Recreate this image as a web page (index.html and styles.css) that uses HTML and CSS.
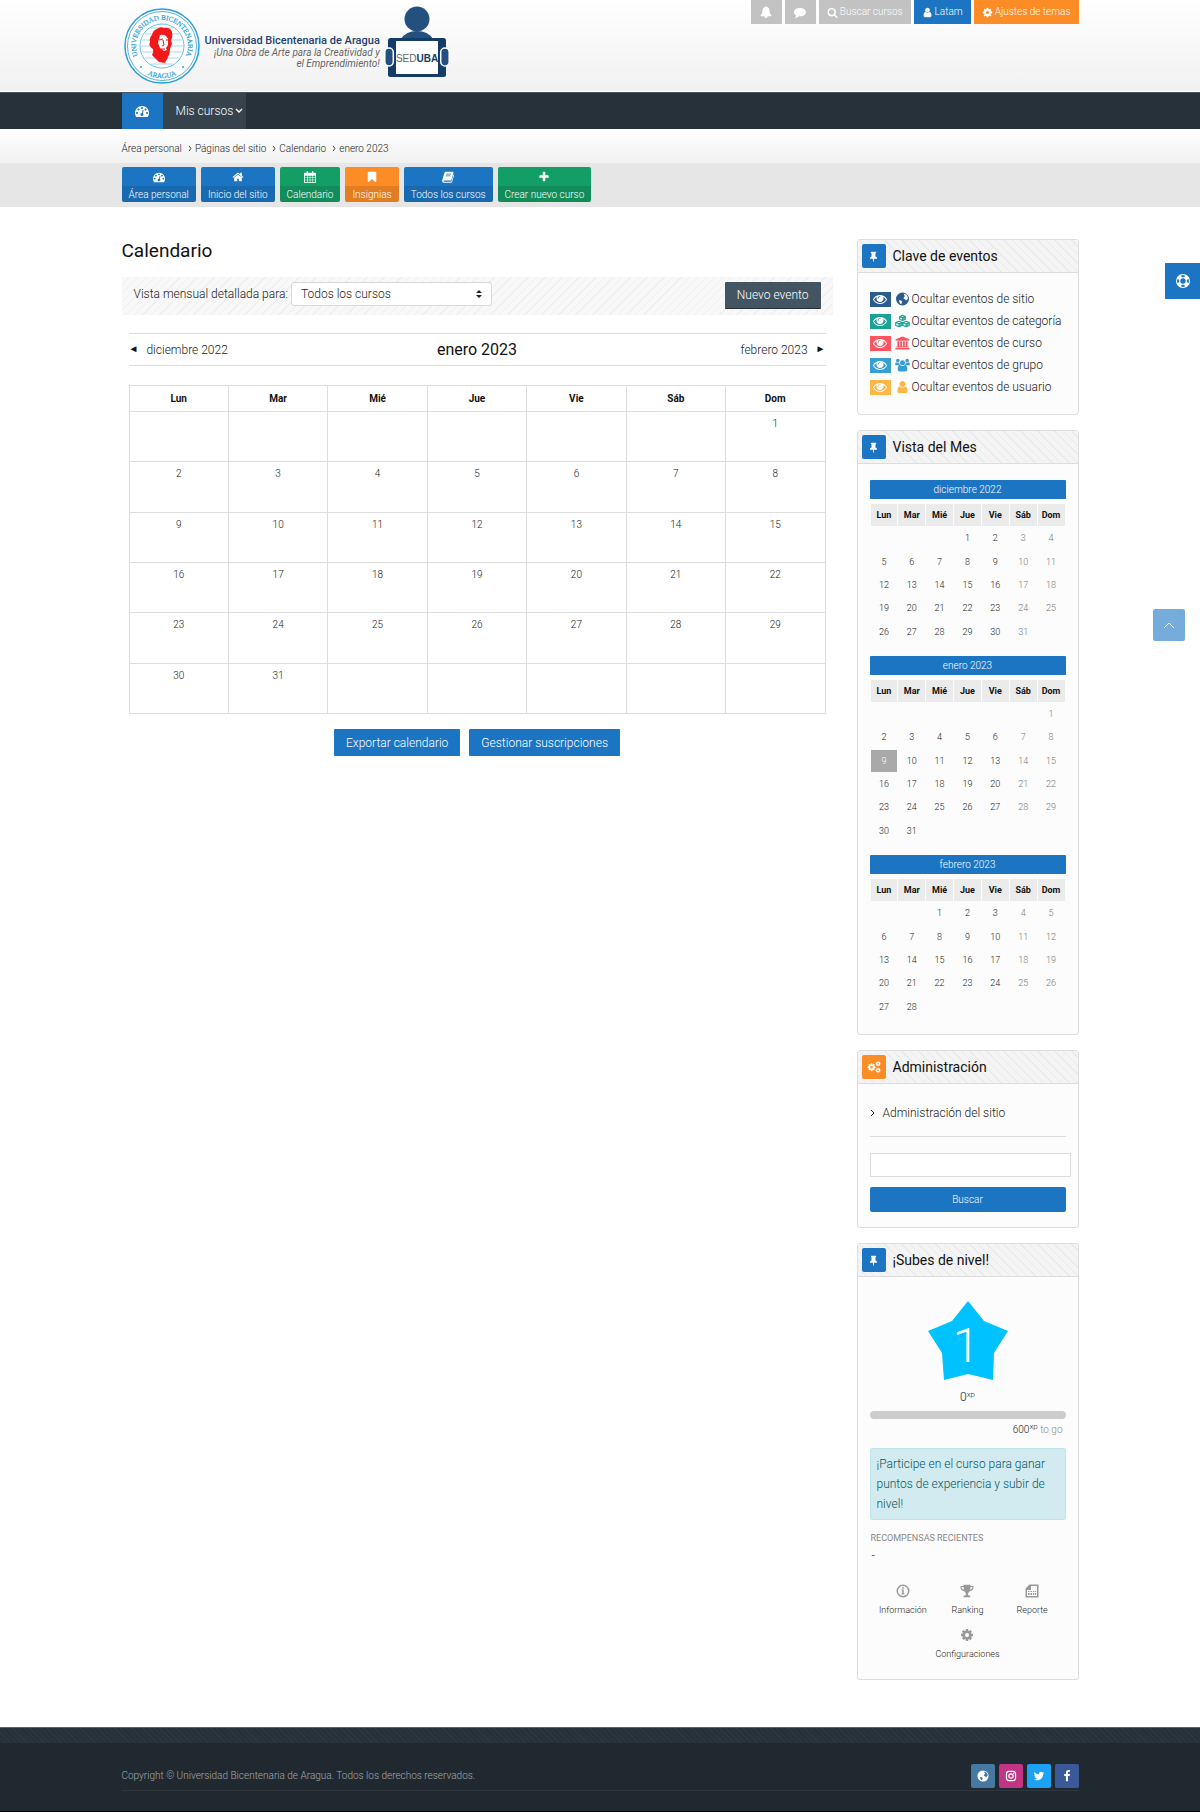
FILE: index.html
```html
<!DOCTYPE html>
<html lang="es">
<head>
<meta charset="utf-8">
<meta name="viewport" content="width=device-width, initial-scale=1">
<title>Calendario - Universidad Bicentenaria de Aragua</title>
<link rel="stylesheet" href="styles.css">
</head>
<body>
<svg class="sprite" aria-hidden="true">
  <symbol id="i-dash" viewBox="0 0 1792 1792"><path d="M384 1152q0-53-37.500-90.500t-90.500-37.500-90.500 37.500-37.500 90.500 37.500 90.500 90.500 37.500 90.500-37.500 37.500-90.500zm192-448q0-53-37.500-90.500t-90.500-37.500-90.500 37.500-37.500 90.500 37.500 90.500 90.500 37.500 90.500-37.500 37.500-90.500zm428 481l101-382q6-26-7.500-48.500t-38.500-29.500-48 6.500-30 39.500l-101 382q-60 5-107 43.500t-63 98.500q-20 77 20 146t117 89 146-20 89-117q16-60-6-117t-72-91zm660-33q0-53-37.500-90.500t-90.500-37.500-90.500 37.500-37.500 90.500 37.500 90.500 90.500 37.500 90.500-37.500 37.500-90.500zm-640-640q0-53-37.500-90.500t-90.500-37.500-90.500 37.500-37.500 90.500 37.500 90.500 90.500 37.500 90.500-37.500 37.500-90.500zm448 192q0-53-37.500-90.500t-90.500-37.500-90.500 37.500-37.500 90.500 37.500 90.500 90.500 37.500 90.500-37.500 37.500-90.500zm320 448q0 261-141 483-19 29-54 29h-1402q-35 0-54-29-141-221-141-483 0-182 71-348t191-286 286-191 348-71 348 71 286 191 191 286 71 348z"/></symbol>
  <symbol id="i-home" viewBox="0 0 1792 1792"><path d="M1472 992v480q0 26-19 45t-45 19h-384v-384h-256v384h-384q-26 0-45-19t-19-45v-480l576-480 575 474q1 2 1 6zm223-69l-62 74q-8 9-21 11h-3q-13 0-21-7l-692-577-692 577q-12 8-24 7-13-2-21-11l-62-74q-8-10-7-23t11-22l719-599q32-26 76-26t76 26l244 204v-195q0-14 9-23t23-9h192q14 0 23 9t9 23v408l219 182q10 8 11 22t-7 23z"/></symbol>
  <symbol id="i-user" viewBox="0 0 1792 1792"><path d="M1536 1399q0 109-62.500 187t-150.500 78h-854q-88 0-150.500-78t-62.500-187q0-85 8.500-160.500t31.500-152 58.500-131 94-89 134.500-34.500q131 128 313 128t313-128q76 0 134.500 34.500t94 89 58.500 131 31.500 152 8.500 160.500zm-256-887q0 159-112.500 271.500t-271.500 112.500-271.500-112.500-112.500-271.500 112.500-271.500 271.500-112.500 271.500 112.500 112.500 271.500z"/></symbol>
  <symbol id="i-cog" viewBox="0 0 1792 1792"><path d="M1152 896q0-106-75-181t-181-75-181 75-75 181 75 181 181 75 181-75 75-181zm512-109v222q0 12-8 23t-20 13l-185 28q-19 54-39 91 35 50 107 138 10 12 10 25t-9 23q-27 37-99 108t-94 71q-12 0-26-9l-138-108q-44 23-91 38-16 136-29 186-7 28-36 28h-222q-14 0-24.500-8.500t-11.500-21.500l-28-184q-49-16-90-37l-141 107q-10 9-25 9-14 0-25-11-126-114-165-168-7-10-7-23 0-12 8-23 15-21 51-66.500t54-70.500q-27-50-41-99l-183-27q-13-2-21-12.500t-8-23.500v-222q0-12 8-23t19-13l186-28q14-46 39-92-40-57-107-138-10-12-10-24 0-10 9-23 26-36 98.500-107.500t94.500-71.500q13 0 26 10l138 107q44-23 91-38 16-136 29-186 7-28 36-28h222q14 0 24.500 8.500t11.500 21.500l28 184q49 16 90 37l142-107q9-9 24-9 13 0 25 10 129 119 165 170 7 8 7 22 0 12-8 23-15 21-51 66.500t-54 70.500q26 50 41 98l183 28q13 2 21 12.500t8 23.500z"/></symbol>
  <symbol id="i-search" viewBox="0 0 1792 1792"><path d="M1216 832q0-185-131.500-316.500t-316.500-131.500-316.500 131.500-131.500 316.500 131.500 316.500 316.500 131.500 316.500-131.500 131.500-316.500zm512 832q0 52-38 90t-90 38q-54 0-90-38l-343-342q-179 124-399 124-143 0-273.500-55.500t-225-150-150-225-55.500-273.500 55.500-273.500 150-225 225-150 273.500-55.500 273.500 55.500 225 150 150 225 55.500 273.500q0 220-124 399l343 343q37 37 37 90z"/></symbol>
  <symbol id="i-comment" viewBox="0 0 1792 1792"><path d="M1792 896q0 174-120 321.500t-326 233-450 85.500q-70 0-145-8-198 175-460 242-49 14-114 22-17 2-30.500-9t-17.500-29q-3-10 13-34 60-66 98-116 60-80 86-186-157-89-247.500-220t-90.500-281q0-130 71-248.500t191-204.500 286-136.500 348-50.500 348 50.500 286 136.500 191 204.500 71 248.500z"/></symbol>
  <symbol id="i-bell" viewBox="0 0 1792 1792"><path d="M1728 1408q0 52-38 90t-90 38h-448q0 106-75 181t-181 75-181-75-75-181h-448q-52 0-90-38t-38-90q50-42 91-88t85-119.500 74.500-158.500 50-206 19.500-260q0-152 117-282.500t307-158.500q-8-19-8-39 0-40 28-68t68-28 68 28 28 68q0 20-8 39 190 28 307 158.500t117 282.500q0 139 19.500 260t50 206 74.500 158.500 85 119.500 91 88z"/></symbol>
  <symbol id="i-twitter" viewBox="0 0 1792 1792"><path d="M1684 408q-67 98-162 167 1 14 1 42 0 130-38 259.500t-115.500 248.500-184.500 210.500-258 146-323 54.500q-271 0-496-145 35 4 78 4 225 0 401-138-105-2-188-64.500t-114-159.500q33 5 61 5 43 0 85-11-112-23-185.500-111.500t-73.500-205.500v-4q68 38 146 41-66-44-105-115t-39-154q0-88 44-163 121 149 294.500 238.500t371.500 99.500q-8-38-8-74 0-134 94.500-228.500t228.500-94.500q140 0 236 102 109-21 205-78-37 115-142 178 93-10 186-50z"/></symbol>
  <symbol id="i-facebook" viewBox="0 0 1792 1792"><path d="M1343 12v264h-157q-86 0-116 36t-30 108v189h293l-39 296h-254v759h-306v-759h-255v-296h255v-218q0-186 104-288.500t277-102.500q147 0 228 12z"/></symbol>
  <symbol id="i-plus" viewBox="0 0 1792 1792"><path d="M1600 736v192q0 40-28 68t-68 28h-416v416q0 40-28 68t-68 28h-192q-40 0-68-28t-28-68v-416h-416q-40 0-68-28t-28-68v-192q0-40 28-68t68-28h416v-416q0-40 28-68t68-28h192q40 0 68 28t28 68v416h416q40 0 68 28t28 68z"/></symbol>
  <symbol id="i-bookmark" viewBox="0 0 1792 1792"><path d="M1420 128q23 0 44 9 72 29 72 103v1289q0 74-72 103-19 8-44 8-48 0-83-32l-441-424-441 424q-36 33-83 33-23 0-44-9-72-29-72-103v-1289q0-74 72-103 21-9 44-9h1048z"/></symbol>
  <symbol id="i-pin" viewBox="0 0 1792 1792"><path d="M1472 1216q0 26-19 45t-45 19h-429l-51 483q-2 12-10.500 20.500t-20.500 8.500h-1q-27 0-32-27l-76-485h-404q-26 0-45-19t-19-45q0-123 78.500-221.500t177.500-98.500v-512q-52 0-90-38t-38-90 38-90 90-38h640q52 0 90 38t38 90-38 90-90 38v512q99 0 177.500 98.500t78.500 221.500z"/></symbol>
  <symbol id="i-eye" viewBox="0 0 1792 1792"><path d="M1664 960q-152-236-381-353 61 104 61 225 0 185-131.500 316.500t-316.500 131.500-316.500-131.500-131.500-316.500q0-121 61-225-229 117-381 353 133 205 333.500 326.500t434.500 121.500 434.500-121.500 333.500-326.500zm-720-384q0-20-14-34t-34-14q-125 0-214.500 89.500t-89.500 214.500q0 20 14 34t34 14 34-14 14-34q0-86 61-147t147-61q20 0 34-14t14-34zm848 384q0 34-20 69-140 230-376.500 368.500t-499.500 138.500-499.500-139-376.500-368q-20-35-20-69t20-69q140-229 376.500-368t499.500-139 499.500 139 376.500 368q20 35 20 69z"/></symbol>
  <symbol id="i-calendar" viewBox="0 0 14 14"><path fill-rule="evenodd" d="M1 2h2V.8q0-.8.800-.8t.8.800V2h4.800V.8q0-.8.800-.8t.8.800V2h2q1 0 1 1v10q0 1-1 1H1q-1 0-1-1V3q0-1 1-1zm0 3.500v2h2.500v-2zm3.200 0v2h2.500v-2zm3.200 0v2h2.500v-2zm3.200 0v2h2.400v-2zM1 8.200v2h2.500v-2zm3.200 0v2h2.500v-2zm3.200 0v2h2.500v-2zm3.200 0v2h2.400v-2zM1 10.900V13h2.500v-2.100zm3.200 0V13h2.500v-2.100zm3.200 0V13h2.500v-2.100zm3.200 0V13h2.400v-2.100z"/></symbol>
  <symbol id="i-book" viewBox="0 0 14 14"><path fill-rule="evenodd" d="M4.500 1h8q1.200 0 .9 1.200l-2.400 8q-.3 1-1.400 1H2.200q-.8 0-.5.700.2.500 1 .5h7.500q.8 0 1-.8l2.300-7.600q.8.400.5 1.400l-2.200 7.200q-.4 1.200-1.500 1.200H2.600Q.6 13.800.2 12q-.2-.8.100-1.500l2.400-8Q3.200 1 4.500 1zm.6 2.200l-.3.900h5.500l.3-.9zm-.6 2l-.3.900h5.500l.3-.9z"/></symbol>
  <symbol id="i-globe" viewBox="0 0 14 14"><path fill-rule="evenodd" d="M7 .5a6.500 6.500 0 100 13 6.500 6.500 0 000-13zM8.500 1.800l2.200.8 1.600 2.400.1 1.800-1.800 1.700-1.200-1.300-1.400-.5.600-1.700 1-1L8.400 3zM3.300 8.200l2.200.3 1.300 1.200-.8 1.500v1l-1.500-.8z"/></symbol>
  <symbol id="i-cubes" viewBox="0 0 16 14"><path fill="none" stroke="currentColor" stroke-width="1.200" stroke-linejoin="round" d="M8 .8l3 1.300v3L8 6.500 5 5.100v-3zM5 2.100l3 1.300 3-1.300M8 3.400v3M4.300 7.200l3.200 1.300v3.200l-3.200 1.500-3.500-1.500V8.500zM.8 8.500L4.200 10l3.300-1.500M4.200 10v3M11.700 7.200l3.500 1.300v3.200l-3.500 1.500-3.200-1.500V8.500zM8.500 8.500l3.300 1.500 3.400-1.500M11.800 10v3"/><path d="M8 3.400l3-1.300v3L8 6.500zM4.200 10l3.300-1.500v3.200L4.200 13zM11.800 10l3.400-1.500v3.200L11.800 13z" opacity=".7"/></symbol>
  <symbol id="i-bank" viewBox="0 0 16 14"><path d="M8 0l7.500 3v1h-1v.7h-13V4h-1V3zM2.500 5.200h2v5.600h1V5.200h2v5.600h1V5.200h2v5.600h1V5.200h2v5.600h1v1H1.500v-1h1zM.5 12.400h15V14H.5z"/></symbol>
  <symbol id="i-users" viewBox="0 0 16 14"><circle cx="3" cy="2.300" r="1.900"/><circle cx="13" cy="2.300" r="1.900"/><circle cx="8" cy="4.500" r="2.700"/><path d="M.3 7.200Q0 4 1.400 4q1.800 1 3.200.2Q4.400 6 5.500 7.200zM15.700 7.200Q16 4 14.600 4q-1.800 1-3.200.2.200 1.800-.9 3zM5.500 7q2.500 2 5 0 2.700.3 2.700 4.500 0 2.300-1.700 2.300h-7q-1.700 0-1.700-2.300Q2.800 7.300 5.500 7z"/></symbol>
  <symbol id="i-ring" viewBox="0 0 14 14"><path fill-rule="evenodd" d="M7 0a7 7 0 100 14A7 7 0 007 0zm0 4.300a2.700 2.700 0 110 5.400 2.700 2.700 0 010-5.400zM5 1.400q2-.7 4 0L8.200 3.200H5.800zM5 12.600q2 .7 4 0l-.8-1.800H5.800zM1.400 5l1.800.8v2.400L1.400 9q-.7-2 0-4zM12.600 5l-1.800.8v2.400l1.800.8q.7-2 0-4z"/></symbol>
  <symbol id="i-cogs" viewBox="0 0 16 14"><use href="#i-cog" x="0" y="2" width="10.500" height="10.500"/><use href="#i-cog" x="9.500" y="0" width="6.500" height="6.500"/><use href="#i-cog" x="9.500" y="7.500" width="6.500" height="6.500"/></symbol>
  <symbol id="i-info" viewBox="0 0 14 14"><path fill-rule="evenodd" d="M7 .5a6.500 6.500 0 100 13 6.500 6.500 0 000-13zM7 2a5 5 0 110 10A5 5 0 017 2zM6.100 3.300h1.700v1.400H6.100zM5.500 5.500h2.300v4h.7v1h-3v-1h.7v-3h-.7z"/></symbol>
  <symbol id="i-trophy" viewBox="0 0 14 14"><path fill-rule="evenodd" d="M3.500.8h7V2h3v1.500Q13.300 6.600 9.800 7.200 8.500 8.500 8 9.500v1q0 .8 2.300 1.300v1.500H3.700v-1.500Q6 11.300 6 10.500v-1q-.5-1-1.800-2.300Q.7 6.600.5 3.500V2h3zm0 2.200h-2q0 2 2.400 3Q3.500 4.500 3.500 3zm7 0q0 1.500-.4 3 2.400-1 2.400-3z"/></symbol>
  <symbol id="i-report" viewBox="0 0 14 14"><path fill-rule="evenodd" d="M4.500.5h9v13H.5v-9zM6 2v4H2v6h10V2zM3 7h1.500v1H3zm2.500 0H7v1H5.500zM8 7h1.200v1H8zm2 0h1.200v1H10zM3 9h1.500v2H3zm2.500 0H7v2H5.500zM8 9h1.200v2H8zm2 0h1.200v2H10z"/></symbol>
  <symbol id="i-instagram" viewBox="0 0 14 14"><rect x="1.700" y="1.700" width="10.600" height="10.600" rx="3" fill="none" stroke="currentColor" stroke-width="1.400"/><circle cx="7" cy="7" r="2.500" fill="none" stroke="currentColor" stroke-width="1.400"/><circle cx="10.100" cy="3.900" r=".8"/></symbol>
</svg>

<header class="masthead">
  <div class="wrap masthead-row">
    <a class="logo" href="#" aria-label="Universidad Bicentenaria de Aragua">
      <svg class="seal" viewBox="0 0 76 76">
        <defs><path id="arcTop" d="M18.100 54.700A26 26 0 1 1 57.900 54.700"/><path id="arcBottom" d="M17 62.300A32 32 0 0 0 59 62.300"/></defs>
        <circle cx="38" cy="38" r="37" fill="#fff" stroke="#2b9fd8" stroke-width="1.500"/>
        <circle cx="38" cy="38" r="34.500" fill="none" stroke="#2b9fd8" stroke-width=".8"/>
        <circle cx="38" cy="38" r="22" fill="none" stroke="#2b9fd8" stroke-width=".7"/>
        <path d="M27 20h22M21 26h34M18 32h40M17 38h42M18 44h40M21 50h34M27 56h22" stroke="#8fd0ee" stroke-width=".8"/>
        <path d="M28 27q1-5 5-6 3-3 7-1 6-1 8 4 1 5-1 8l1 4q-1 2-2 5 0 5-2 8l-3 6-6-1-7-7q2-3 1-6-5-3-3-7-1-4 2-7z" fill="#f01818"/>
        <path d="M36 27q3-1 6 1l2 3v6l-2 3 1 2-3 1-4-3-2-5z" fill="#fff"/>
        <path d="M35 32l4-1m3 1l2 0M39 32l1 5-2 1m-1 3h4M35 42l3 4 4 1" stroke="#f01818" stroke-width="1" fill="none"/>
        <text class="seal-text"><textPath href="#arcTop" startOffset="50%" text-anchor="middle">UNIVERSIDAD BICENTENARIA</textPath></text>
        <text class="seal-text"><textPath href="#arcBottom" startOffset="50%" text-anchor="middle">ARAGUA</textPath></text>
        <circle cx="17" cy="59" r="1" fill="#2b9fd8"/><circle cx="59" cy="59" r="1" fill="#2b9fd8"/>
      </svg>
      <span class="logo-words"><strong>Universidad Bicentenaria de Aragua</strong><em>¡Una Obra de Arte para la Creatividad y<br>el Emprendimiento!</em></span>
      <svg class="seduba" viewBox="0 0 66 74">
        <circle cx="33" cy="13" r="12.500" fill="#24507f"/>
        <path d="M17 33q5-8 16-8t16 8z" fill="#24507f"/>
        <rect x="4" y="32" width="58" height="39" rx="2.500" fill="#143c68"/>
        <rect x="12" y="35" width="42" height="33" fill="#fff"/>
        <rect x=".8" y="42" width="8.500" height="18" rx="4.200" fill="#24507f" stroke="#fff" stroke-width="1.500"/>
        <rect x="56.700" y="42" width="8.500" height="18" rx="4.200" fill="#24507f" stroke="#fff" stroke-width="1.500"/>
        <text x="33" y="56" text-anchor="middle" class="sed-text">SED<tspan class="uba-text">UBA</tspan></text>
      </svg>
    </a>
    <div class="user-tools">
      <button class="tool" type="button" aria-label="Notificaciones"><svg class="icon"><use href="#i-bell"/></svg></button>
      <button class="tool" type="button" aria-label="Mensajes"><svg class="icon"><use href="#i-comment"/></svg></button>
      <button class="tool tool-text" type="button"><svg class="icon-sm"><use href="#i-search"/></svg>Buscar cursos</button>
      <button class="tool tool-text blue" type="button"><svg class="icon-sm"><use href="#i-user"/></svg>Latam</button>
      <button class="tool tool-text orange" type="button"><svg class="icon-sm"><use href="#i-cog"/></svg>Ajustes de temas</button>
    </div>
  </div>
</header>

<nav class="mainnav">
  <div class="wrap mainnav-row">
    <a class="nav-home" href="#" aria-label="Área personal"><svg class="icon-lg"><use href="#i-dash"/></svg></a>
    <a class="nav-item" href="#">Mis cursos<svg class="caret" viewBox="0 0 8 8"><path d="M1 2l3 3 3-3" fill="none" stroke="currentColor" stroke-width="1.400"/></svg></a>
  </div>
</nav>

<nav class="crumbs" aria-label="Ruta">
  <div class="wrap crumbs-row">
    <a href="#">Área personal</a><svg class="sep" viewBox="0 0 4 8"><path d="M1 1l2 3-2 3"/></svg><a href="#">Páginas del sitio</a><svg class="sep" viewBox="0 0 4 8"><path d="M1 1l2 3-2 3"/></svg><a href="#">Calendario</a><svg class="sep" viewBox="0 0 4 8"><path d="M1 1l2 3-2 3"/></svg><a href="#">enero 2023</a>
  </div>
</nav>

<div class="shortcuts">
  <div class="wrap shortcuts-row">
    <a class="shortcut blue" href="#"><svg class="icon"><use href="#i-dash"/></svg><span>Área personal</span></a>
    <a class="shortcut blue" href="#"><svg class="icon"><use href="#i-home"/></svg><span>Inicio del sitio</span></a>
    <a class="shortcut green" href="#"><svg class="icon"><use href="#i-calendar"/></svg><span>Calendario</span></a>
    <a class="shortcut orange" href="#"><svg class="icon"><use href="#i-bookmark"/></svg><span>Insignias</span></a>
    <a class="shortcut blue" href="#"><svg class="icon"><use href="#i-book"/></svg><span>Todos los cursos</span></a>
    <a class="shortcut green" href="#"><svg class="icon"><use href="#i-plus"/></svg><span>Crear nuevo curso</span></a>
  </div>
</div>

<div class="wrap page">
  <main>
    <h1>Calendario</h1>
    <div class="filter">
      <label for="course">Vista mensual detallada para:</label>
      <span class="select">
        <select id="course"><option>Todos los cursos</option></select>
        <svg viewBox="0 0 6 8"><path d="M0 3l3-3 3 3zM0 5l3 3 3-3z"/></svg>
      </span>
      <button class="btn dark" type="button">Nuevo evento</button>
    </div>
    <div class="month-nav">
      <a href="#"><span class="arrow">◄</span>diciembre 2022</a>
      <h2>enero 2023</h2>
      <a class="next" href="#">febrero 2023<span class="arrow">►</span></a>
    </div>
    <table class="month">
      <thead><tr><th>Lun</th><th>Mar</th><th>Mié</th><th>Jue</th><th>Vie</th><th>Sáb</th><th>Dom</th></tr></thead>
      <tbody>
        <tr><td></td><td></td><td></td><td></td><td></td><td></td><td>1</td></tr>
        <tr><td>2</td><td>3</td><td>4</td><td>5</td><td>6</td><td>7</td><td>8</td></tr>
        <tr><td>9</td><td>10</td><td>11</td><td>12</td><td>13</td><td>14</td><td>15</td></tr>
        <tr><td>16</td><td>17</td><td>18</td><td>19</td><td>20</td><td>21</td><td>22</td></tr>
        <tr><td>23</td><td>24</td><td>25</td><td>26</td><td>27</td><td>28</td><td>29</td></tr>
        <tr><td>30</td><td>31</td><td></td><td></td><td></td><td></td><td></td></tr>
      </tbody>
    </table>
    <div class="actions">
      <button class="btn blue" type="button">Exportar calendario</button>
      <button class="btn blue" type="button">Gestionar suscripciones</button>
    </div>
  </main>

  <aside>
    <section class="panel">
      <h2 class="panel-head"><span class="badge blue"><svg class="icon-sm"><use href="#i-pin"/></svg></span>Clave de eventos</h2>
      <ul class="panel-body keys">
        <li class="k-site"><a href="#"><span class="eye"><svg class="icon-lg"><use href="#i-eye"/></svg></span><svg class="key-icon"><use href="#i-globe"/></svg>Ocultar eventos de sitio</a></li>
        <li class="k-category"><a href="#"><span class="eye"><svg class="icon-lg"><use href="#i-eye"/></svg></span><svg class="key-icon"><use href="#i-cubes"/></svg>Ocultar eventos de categoría</a></li>
        <li class="k-course"><a href="#"><span class="eye"><svg class="icon-lg"><use href="#i-eye"/></svg></span><svg class="key-icon"><use href="#i-bank"/></svg>Ocultar eventos de curso</a></li>
        <li class="k-group"><a href="#"><span class="eye"><svg class="icon-lg"><use href="#i-eye"/></svg></span><svg class="key-icon"><use href="#i-users"/></svg>Ocultar eventos de grupo</a></li>
        <li class="k-user"><a href="#"><span class="eye"><svg class="icon-lg"><use href="#i-eye"/></svg></span><svg class="key-icon"><use href="#i-user"/></svg>Ocultar eventos de usuario</a></li>
      </ul>
    </section>

    <section class="panel">
      <h2 class="panel-head"><span class="badge blue"><svg class="icon-sm"><use href="#i-pin"/></svg></span>Vista del Mes</h2>
      <div class="panel-body minis">
        <div class="mini">
          <a class="mini-title" href="#">diciembre 2022</a>
          <table class="weeks-5">
            <thead><tr><th>Lun</th><th>Mar</th><th>Mié</th><th>Jue</th><th>Vie</th><th>Sáb</th><th>Dom</th></tr></thead>
            <tbody>
              <tr><td></td><td></td><td></td><td>1</td><td>2</td><td>3</td><td>4</td></tr>
              <tr><td>5</td><td>6</td><td>7</td><td>8</td><td>9</td><td>10</td><td>11</td></tr>
              <tr><td>12</td><td>13</td><td>14</td><td>15</td><td>16</td><td>17</td><td>18</td></tr>
              <tr><td>19</td><td>20</td><td>21</td><td>22</td><td>23</td><td>24</td><td>25</td></tr>
              <tr><td>26</td><td>27</td><td>28</td><td>29</td><td>30</td><td>31</td><td></td></tr>
            </tbody>
          </table>
        </div>
        <div class="mini">
          <a class="mini-title" href="#">enero 2023</a>
          <table class="weeks-6">
            <thead><tr><th>Lun</th><th>Mar</th><th>Mié</th><th>Jue</th><th>Vie</th><th>Sáb</th><th>Dom</th></tr></thead>
            <tbody>
              <tr><td></td><td></td><td></td><td></td><td></td><td></td><td>1</td></tr>
              <tr><td>2</td><td>3</td><td>4</td><td>5</td><td>6</td><td>7</td><td>8</td></tr>
              <tr><td class="today">9</td><td>10</td><td>11</td><td>12</td><td>13</td><td>14</td><td>15</td></tr>
              <tr><td>16</td><td>17</td><td>18</td><td>19</td><td>20</td><td>21</td><td>22</td></tr>
              <tr><td>23</td><td>24</td><td>25</td><td>26</td><td>27</td><td>28</td><td>29</td></tr>
              <tr><td>30</td><td>31</td><td></td><td></td><td></td><td></td><td></td></tr>
            </tbody>
          </table>
        </div>
        <div class="mini">
          <a class="mini-title" href="#">febrero 2023</a>
          <table class="weeks-5">
            <thead><tr><th>Lun</th><th>Mar</th><th>Mié</th><th>Jue</th><th>Vie</th><th>Sáb</th><th>Dom</th></tr></thead>
            <tbody>
              <tr><td></td><td></td><td>1</td><td>2</td><td>3</td><td>4</td><td>5</td></tr>
              <tr><td>6</td><td>7</td><td>8</td><td>9</td><td>10</td><td>11</td><td>12</td></tr>
              <tr><td>13</td><td>14</td><td>15</td><td>16</td><td>17</td><td>18</td><td>19</td></tr>
              <tr><td>20</td><td>21</td><td>22</td><td>23</td><td>24</td><td>25</td><td>26</td></tr>
              <tr><td>27</td><td>28</td><td></td><td></td><td></td><td></td><td></td></tr>
            </tbody>
          </table>
        </div>
      </div>
    </section>

    <section class="panel">
      <h2 class="panel-head"><span class="badge orange"><svg class="icon-lg"><use href="#i-cogs"/></svg></span>Administración</h2>
      <form class="panel-body admin">
        <a href="#"><svg class="chev" viewBox="0 0 5 8"><path d="M1 1l3 3-3 3"/></svg>Administración del sitio</a>
        <hr>
        <input type="text" aria-label="Buscar en la administración">
        <button class="btn blue" type="button">Buscar</button>
      </form>
    </section>

    <section class="panel">
      <h2 class="panel-head"><span class="badge blue"><svg class="icon-sm"><use href="#i-pin"/></svg></span>¡Subes de nivel!</h2>
      <div class="panel-body level">
        <svg class="star" viewBox="0 0 80 80"><path d="M40 0l16 20 24 10-14 22-1 27-25-6-24 6-2-27L0 30l24-10z" fill="#00c2ff"/><text x="38" y="61" text-anchor="middle">1</text></svg>
        <p class="xp">0<sup>xp</sup></p>
        <div class="bar"></div>
        <p class="togo"><b>600<sup>xp</sup></b> to go</p>
        <p class="notice">¡Participe en el curso para ganar puntos de experiencia y subir de nivel!</p>
        <h3>Recompensas recientes</h3>
        <p class="none">-</p>
        <div class="level-links">
          <a href="#"><svg class="icon-lg"><use href="#i-info"/></svg>Información</a>
          <a href="#"><svg class="icon-lg"><use href="#i-trophy"/></svg>Ranking</a>
          <a href="#"><svg class="icon-lg"><use href="#i-report"/></svg>Reporte</a>
          <a href="#"><svg class="icon-lg"><use href="#i-cog"/></svg>Configuraciones</a>
        </div>
      </div>
    </section>
  </aside>
</div>

<footer>
  <div class="footer-strip"></div>
  <div class="wrap footer-row">
    <p>Copyright © Universidad Bicentenaria de Aragua. Todos los derechos reservados.</p>
    <div class="social">
      <a class="web" href="#" aria-label="Sitio web"><svg class="icon"><use href="#i-globe"/></svg></a>
      <a class="instagram" href="#" aria-label="Instagram"><svg class="icon"><use href="#i-instagram"/></svg></a>
      <a class="twitter" href="#" aria-label="Twitter"><svg class="icon"><use href="#i-twitter"/></svg></a>
      <a class="facebook" href="#" aria-label="Facebook"><svg class="icon"><use href="#i-facebook"/></svg></a>
    </div>
  </div>
</footer>

<a class="help" href="#" aria-label="Ayuda"><svg class="icon-lg"><use href="#i-ring"/></svg></a>
<a class="to-top" href="#" aria-label="Subir"><svg viewBox="0 0 12 8"><path d="M1 7l5-5 5 5"/></svg></a>
</body>
</html>
```
FILE: styles.css
```css
* { box-sizing: border-box; }

body {
  margin: 0;
  background: #fff;
  color: #222;
  font: 300 12px/18px Roboto, "Liberation Sans", sans-serif;
}

a { color: inherit; text-decoration: none; }
h1, h2, h3, p, ul { margin: 0; padding: 0; }
h1, h2, h3 { font-weight: 400; }
ul { list-style: none; }
button, input, select { font: inherit; color: inherit; margin: 0; }
button { border: 0; cursor: pointer; }
table { border-spacing: 0; }

.sprite { position: absolute; width: 0; height: 0; }
svg { fill: currentColor; flex: none; display: block; }
.icon { width: 12px; height: 12px; }
.icon-sm { width: 11px; height: 11px; }
.icon-lg { width: 14px; height: 14px; }

.wrap { width: 100%; max-width: 957px; margin: 0 auto; }

.blue { background: #1b75c3; color: #fff; }
.orange { background: #fc8c25; color: #fff; }
.green { background: #129e65; color: #fff; }
.dark { background: #435563; color: #fff; }

/* Header */
.masthead {
  background: linear-gradient(#fff, #f1f1f1);
  border-bottom: 1px solid #fff;
}
.masthead-row {
  display: flex;
  justify-content: space-between;
  align-items: flex-start;
  min-height: 91px;
}
.logo { display: flex; align-items: flex-start; padding: 6px 0 0 2px; }
.seal { width: 76px; height: 80px; }
.seal-text { font: 400 7px "Liberation Serif", serif; fill: #2b9fd8; stroke: #2b9fd8; stroke-width: 0.2px; }
.logo-words {
  display: flex;
  flex-direction: column;
  text-align: right;
  padding: 28px 0 0 5px;
}
.logo-words strong { font-weight: 500; font-size: 11px; line-height: 13px; color: #1d4370; }
.logo-words em { font-weight: 400; font-size: 10px; line-height: 11px; color: #666; }
.seduba { width: 66px; height: 74px; margin-left: 4px; }
.sed-text { font: 400 10px "Liberation Sans", sans-serif; fill: #666; }
.uba-text { font-weight: 700; fill: #143c68; }

.user-tools { display: flex; gap: 3px; }
.tool {
  display: flex;
  align-items: center;
  justify-content: center;
  width: 31px;
  height: 24px;
  padding: 0;
  background: #c2c2c2;
  color: #fff;
  font-size: 10px;
}
.tool-text { width: auto; padding: 0 8px; gap: 2px; }
.tool.blue { background: #1b75c3; }
.tool.orange { background: #fc8c25; }

/* Main navigation */
.mainnav { background: #27313a; border-top: 1px solid #4b545c; color: #fff; }
.mainnav-row { display: flex; height: 36px; }
.nav-home {
  display: flex;
  align-items: center;
  justify-content: center;
  width: 41px;
  background: #1b75c3;
}
.nav-item {
  display: flex;
  align-items: center;
  padding: 0 3px 0 13px;
  gap: 2px;
  background: #36434d;
}
.caret { width: 8px; height: 8px; }

.crumbs { background: linear-gradient(#fff, #f1f1f1); font-size: 10px; }
.crumbs-row { display: flex; align-items: center; height: 34px; padding-top: 5px; }
.sep { width: 4px; height: 7px; margin: 0 3px 0 6px; }
.sep path, .chev path, .to-top path { fill: none; stroke: currentColor; }

.shortcuts { background: #e6e6e6; }
.shortcuts-row { display: flex; gap: 5px; padding: 4px 0 5px; }
.shortcut {
  display: flex;
  flex-direction: column;
  align-items: center;
  height: 35px;
  border-radius: 2px;
  font-size: 10px;
  overflow: hidden;
}
.shortcut .icon { margin: 4px 0 3px; }
.shortcut span {
  padding: 0 7px;
  height: 16px;
  line-height: 17px;
  background: rgba(0, 0, 0, .1);
}

/* Page */
.page {
  display: grid;
  grid-template-columns: minmax(0, 1fr) 222px;
  gap: 24px;
  padding: 32px 0 47px;
  align-items: start;
}
h1 { font-size: 19px; line-height: 24px; color: #111; margin-bottom: 14px; }

.filter {
  display: flex;
  align-items: center;
  gap: 3px;
  height: 38px;
  padding: 0 12px;
  background: repeating-linear-gradient(135deg, #f8f8f8 0 5px, #efefef 5px 6px);
}
.select { position: relative; flex: 0 1 201px; margin-bottom: 4px; }
.filter label { margin-bottom: 4px; }
.select select {
  display: block;
  appearance: none;
  width: 100%;
  height: 24px;
  padding: 0 9px;
  background: #fff;
  border: 1px solid #d5d9dd;
  border-radius: 3px;
}
.select svg { position: absolute; right: 10px; top: 8px; width: 6px; height: 8px; }
.btn { height: 27px; padding: 0 12px; border-radius: 1px; }
.filter .btn { margin: 0 0 2px auto; border-bottom: 1px solid #27313a; }

.month-nav {
  display: grid;
  grid-template-columns: 1fr auto 1fr;
  align-items: center;
  height: 33px;
  margin: 18px 7px 19px;
  border-top: 1px solid #ddd;
  border-bottom: 1px solid #ddd;
}
.month-nav a { display: flex; gap: 8px; }
.month-nav .next { justify-content: flex-end; }
.month-nav h2 { font-size: 16px; color: #111; }
.arrow { font: 400 10px/16px "Liberation Sans", sans-serif; color: #111; }

.month {
  width: calc(100% - 14px);
  height: 329px;
  margin: 0 7px;
  table-layout: fixed;
  border-collapse: collapse;
  font-size: 10px;
  text-align: center;
}
.month th, .month td { border: 1px solid #ddd; padding: 0; }
.month th { height: 26px; font-weight: 700; color: #111; }
.month td { height: 50px; padding-top: 3px; vertical-align: top; }

.actions { display: flex; justify-content: center; gap: 9px; padding-top: 15px; }

/* Sidebar */
.panel {
  margin-bottom: 15px;
  background: #fcfcfc;
  border: 1px solid #ddd;
  border-radius: 3px;
}
.panel:last-child { margin-bottom: 0; }
.panel-head {
  display: flex;
  align-items: center;
  gap: 7px;
  height: 33px;
  padding: 0 4px;
  border-bottom: 1px solid #ddd;
  background: repeating-linear-gradient(45deg, #f4f4f4 0 5px, #eaeaea 5px 6px);
  color: #111;
  font-size: 14px;
}
.badge {
  display: flex;
  align-items: center;
  justify-content: center;
  width: 24px;
  height: 24px;
  border-radius: 2px;
}
.panel-body { padding: 16px 12px 15px; }

.keys { padding: 15px 12px 16px; }
.keys a { display: flex; align-items: center; height: 22px; }
.eye {
  display: flex;
  align-items: center;
  justify-content: center;
  width: 21px;
  height: 15px;
  color: #fff;
}
.key-icon { width: 15px; height: 14px; margin: 0 2px 0 4px; }
.k-site .eye { background: #2c5c8e; }
.k-site .key-icon { color: #2c5c8e; }
.k-category .eye { background: #1aa394; }
.k-category .key-icon { color: #1aa394; }
.k-course .eye { background: #fc5560; }
.k-course .key-icon { color: #fc5560; }
.k-group .eye { background: #379fd3; }
.k-group .key-icon { color: #379fd3; }
.k-user .eye { background: #feb645; }
.k-user .key-icon { color: #feb645; }

.minis { display: flex; flex-direction: column; gap: 12px; }
.mini { display: flex; flex-direction: column; gap: 4px; }
.mini-title {
  border-radius: 1px;
  background: #1b75c3;
  color: #fff;
  font-size: 10px;
  line-height: 19px;
  text-align: center;
}
.mini table {
  width: 100%;
  table-layout: fixed;
  border-spacing: 1px;
  font-size: 9px;
  text-align: center;
}
.weeks-5 { height: 141px; }
.weeks-6 { height: 164px; }
.mini th, .mini td { padding: 0; line-height: 22px; }
.mini th { background: #ebebeb; color: #111; font-weight: 700; }
.mini td:nth-child(n + 6) { color: #777; }
.mini .today { background: #a9a9a9; color: #fff; }

.admin { display: flex; flex-direction: column; padding: 20px 12px 15px; }
.admin a { display: flex; align-items: center; gap: 8px; }
.chev { width: 5px; height: 8px; }
.admin hr { width: 100%; margin: 14px 0 16px; border: 0; border-top: 1px solid #ddd; }
.admin input {
  width: calc(100% + 5px);
  height: 24px;
  border: 1px solid #ddd;
  background: #fff;
  margin-bottom: 10px;
}
.admin .btn { height: 25px; font-size: 10px; border-radius: 2px; }

.level { padding: 24px 12px 11px; }
.star { width: 80px; height: 80px; margin: 0 auto; }
.star text { font: 300 48px Roboto, sans-serif; fill: #fff; }
sup { font-size: 8px; line-height: 0; vertical-align: 4px; }
.xp { margin-top: 7px; text-align: center; }
.bar { height: 8px; margin: 5px 0 2px; border-radius: 4px; background: #ccc; }
.togo { padding-right: 3px; text-align: right; font-size: 10px; color: #888; }
.togo b { font-weight: 300; color: #222; }
.notice {
  margin: 9px 0;
  padding: 5px 6px;
  border: 1px solid #bee5eb;
  border-radius: 2px;
  background: #d1ebf0;
  color: #0c5460;
  line-height: 20px;
}
.level h3 { padding-left: 1px; font-size: 9px; color: #888; text-transform: uppercase; }
.none { padding-left: 2px; }
.level-links {
  display: flex;
  flex-wrap: wrap;
  justify-content: center;
  padding-top: 15px;
  font-size: 9px;
}
.level-links a {
  flex: 0 0 33%;
  display: flex;
  flex-direction: column;
  align-items: center;
  height: 44px;
  padding-top: 4px;
}
.level-links svg { color: #999; margin-bottom: 3px; }

/* Footer */
footer { background: #212930; border-bottom: 1px solid #000; }
.footer-strip {
  height: 16px;
  border-top: 1px solid #5b646b;
  background: repeating-linear-gradient(45deg, #27313a 0 3px, #2c3740 3px 4px);
}
.footer-row {
  display: flex;
  align-items: center;
  justify-content: space-between;
  margin-bottom: 20px;
  padding: 21px 0 2px;
  border-bottom: 1px solid #2d363e;
  color: #a3a9ae;
  font-size: 10px;
}
.social { display: flex; gap: 4px; }
.social a {
  display: flex;
  align-items: center;
  justify-content: center;
  width: 24px;
  height: 24px;
  border-radius: 2px;
  color: #fff;
}
.web { background: #46799f; }
.instagram { background: #c13584; }
.twitter { background: #1da1f2; }
.facebook { background: #3b5998; }

/* Floating buttons */
.help {
  position: fixed;
  top: 263px;
  right: 0;
  display: grid;
  place-items: center;
  width: 35px;
  height: 36px;
  background: #1b75c3;
  color: #fff;
}
.to-top {
  position: fixed;
  top: 609px;
  right: 15px;
  display: grid;
  place-items: center;
  width: 32px;
  height: 32px;
  border-radius: 2px;
  background: #76acdb;
  color: #fff;
}
.to-top svg { width: 12px; height: 8px; }
```
